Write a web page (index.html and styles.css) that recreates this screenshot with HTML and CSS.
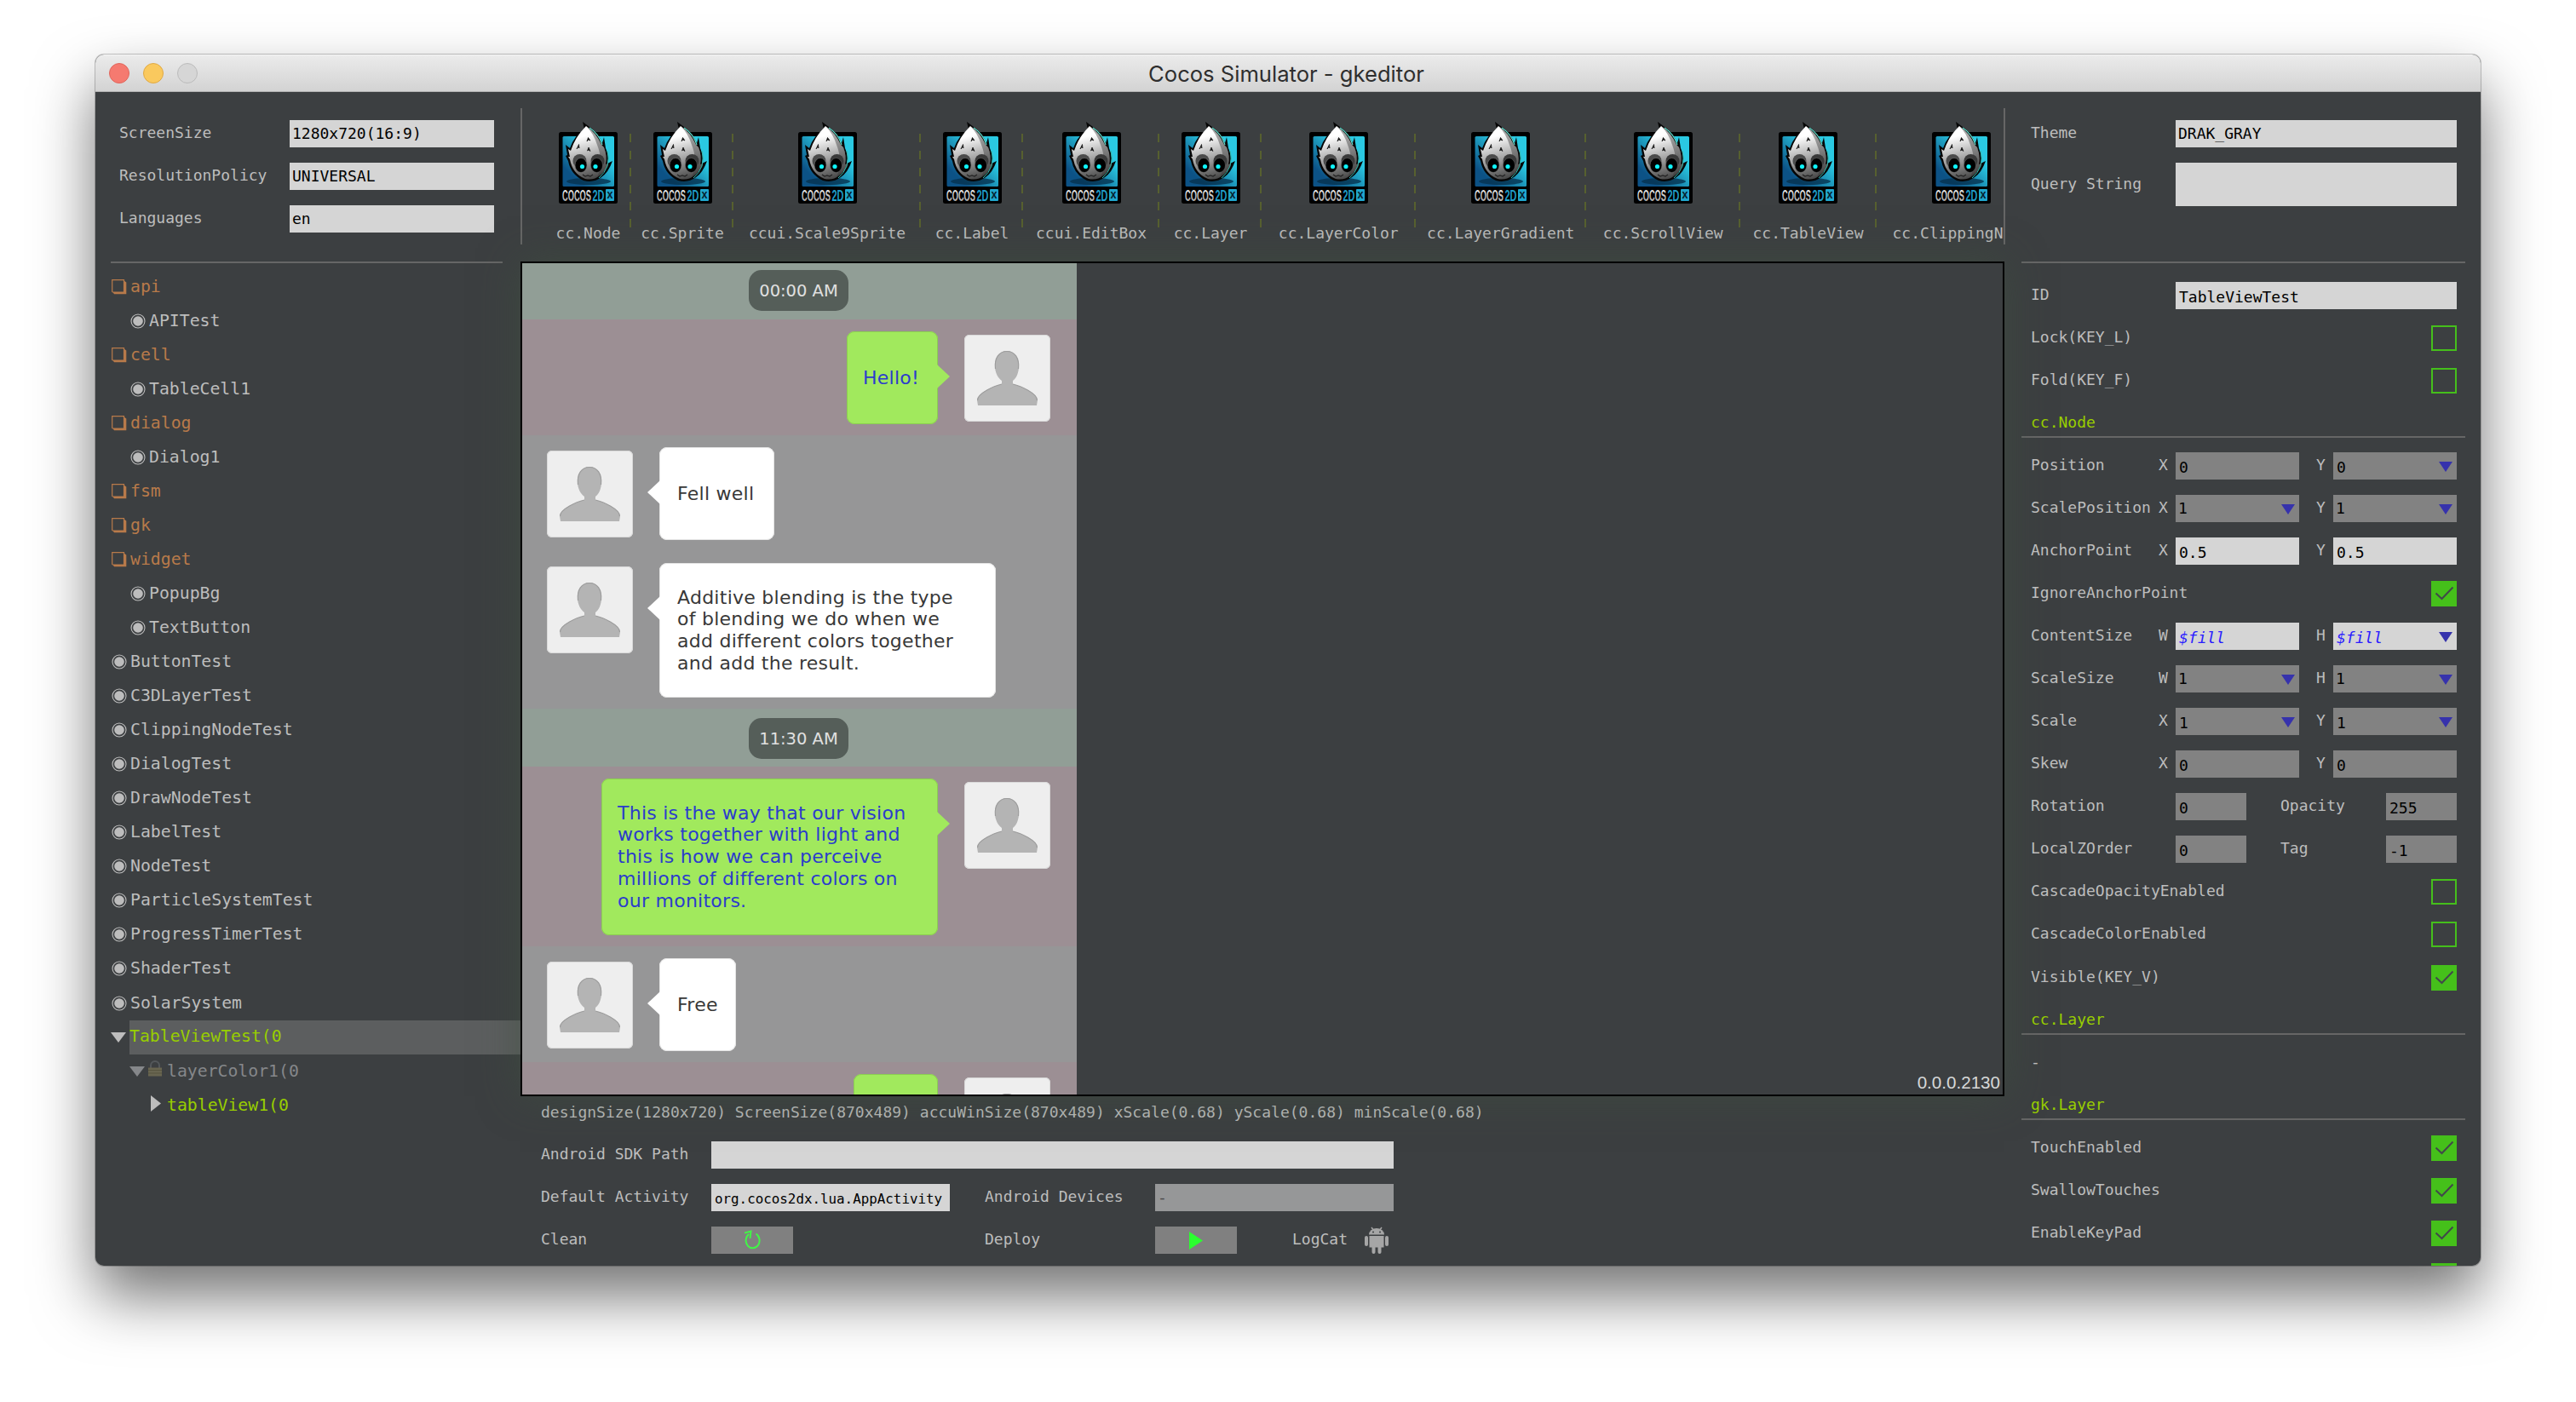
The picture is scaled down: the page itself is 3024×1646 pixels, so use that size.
FILE: index.html
```html
<!DOCTYPE html>
<html lang="en">
<head>
<meta charset="utf-8">
<title>Cocos Simulator - gkeditor</title>
<link rel="stylesheet" href="styles.css">
</head>
<body>
<svg class="defs" width="0" height="0">
  <defs>
    <linearGradient id="sky" x1="1" y1="0" x2="0" y2="1"><stop offset="0.3" stop-color="#2ac9e2"/><stop offset="0.8" stop-color="#0c5286"/></linearGradient>
    <linearGradient id="face" x1="0.3" y1="0" x2="0.5" y2="1"><stop offset="0.2" stop-color="#fff"/><stop offset="0.6" stop-color="#a9a9a9"/><stop offset="1" stop-color="#4a4a4a"/></linearGradient>
    <linearGradient id="silver" x1="0" y1="0" x2="0" y2="1"><stop offset="0" stop-color="#fff"/><stop offset="1" stop-color="#999"/></linearGradient>
    <symbol id="cocos" viewBox="0 0 69 97">
      <rect x="0" y="12" width="69" height="84" rx="2.5" fill="#000"/>
      <rect x="4.5" y="17" width="60.5" height="59" rx="1.5" fill="url(#sky)"/>
      <ellipse cx="35" cy="70" rx="26" ry="4" fill="#06324f" opacity=".8"/>
      <path d="M28 0 L40 9 Q47 15 51 25 L53 18 L55 31 Q59 39 57 49 L63 46 Q58 60 50 65 Q41 72 29 69 Q14 62 11 46 L8 40 L10 39 L8 27 L13 31 Q18 16 30 9 Z" fill="#060606"/>
      <path d="M32 5 Q44 13 50 27 L53 30 Q57 40 55 50 L58 49 Q55 58 48 63 Q41 69 31 67 Q16 61 13 44 L11 41 L13 41 L11 32 L14 34 Q19 18 32 5 Z" fill="url(#face)"/>
      <path d="M32 5 Q44 13 50 27 L53 30 Q57 40 55 50 L58 49 Q54 60 45 65 Q53 47 45 27 Q41 14 32 5 Z" fill="#333" opacity=".42"/>
      <path d="M36 7 Q47 14 51 27" fill="none" stroke="#5fdccb" stroke-width="1.2"/>
      <path d="M57 34 Q60 43 57 52 Q54 60 47 66" fill="none" stroke="#35b9ad" stroke-width="1"/>
      <ellipse cx="24.500" cy="46" rx="8" ry="8" fill="#4b4b4b"/><ellipse cx="45.500" cy="46" rx="8" ry="8" fill="#3a3a3a"/>
      <ellipse cx="26" cy="51" rx="7" ry="8.500" fill="#000" stroke="#777" stroke-width=".6"/>
      <ellipse cx="44.500" cy="51" rx="7" ry="8.500" fill="#000" stroke="#666" stroke-width=".6"/>
      <circle cx="27.500" cy="52.500" r="2.600" fill="#0ef4fb"/><circle cx="43" cy="52.500" r="2.600" fill="#0ef4fb"/>
      <path d="M33 23 L34.500 18.500 L37 22 L34.500 21 Z M21 32 L23.500 26.500 L24 31 L23 29.500 Z M33.500 34 L35 30 L37 34.500 L35 33 Z" fill="#111" stroke="#111" stroke-width=".7"/>
      <path d="M28 62 l3 2 3-1 3 1 3-2" fill="none" stroke="#222" stroke-width="1.200"/>
      <rect x="55" y="79" width="10" height="14" rx="1" fill="#1fa6cc"/>
      <text x="4" y="92.500" class="logo-text" textLength="34" lengthAdjust="spacingAndGlyphs" fill="url(#silver)">COCOS</text>
      <text x="39.500" y="92.500" class="logo-text" textLength="14" lengthAdjust="spacingAndGlyphs" fill="#1f9cc6">2D</text>
      <text x="56.500" y="89.500" class="logo-x" textLength="7" lengthAdjust="spacingAndGlyphs">x</text>
    </symbol>
    <symbol id="person" viewBox="0 0 101 102">
      <path d="M50 19 C59 19 64 27 64 37 C64 45 61 51 57 54 L57 58 C66 60 86 69 86 77 L85 83 L16 83 L15 77 C15 69 35 60 44 58 L44 54 C40 51 36 45 36 37 C36 27 41 19 50 19 Z" fill="#b4b4b4"/>
      <path d="M36.500 40 C35 27 41 19.500 50 19.500 C59 19.500 65 27 63.500 40 M15.500 77 C15 69 35 60 44 58 M57 58 C66 60 86 69 85.500 77" fill="none" stroke="#9c9c9c" stroke-width="1.200"/>
    </symbol>
    <symbol id="folder" viewBox="0 0 18 18"><path d="M.7 .7 H14.500 V15 H1.500 Q.7 15 .7 14 Z" fill="none" stroke="#b87a4a" stroke-width="1.200"/><path d="M14.500 1.500 L17.300 3.500 V17.300 H3 L1.500 15 H14.500 Z" fill="#b87a4a"/></symbol>
    <symbol id="radio" viewBox="0 0 18 18"><circle cx="9" cy="9" r="8" fill="none" stroke="#bdbdbd" stroke-width="1.100"/><circle cx="9" cy="9" r="5.800" fill="#bdbdbd"/></symbol>
    <symbol id="down" viewBox="0 0 18 12" preserveAspectRatio="none"><path d="M0 0H18L9 12Z" fill="currentColor"/></symbol>
    <symbol id="tick" viewBox="0 0 30 30"><path d="M5.500 14.500 L12.500 21 L25.500 7.500" fill="none" stroke="#41484a" stroke-width="2"/></symbol>
  </defs>
</svg>

<main class="window">
  <header class="titlebar">
    <div class="lights"><i class="light red"></i><i class="light amber"></i><i class="light off"></i></div>
    <h1 class="title">Cocos Simulator - gkeditor</h1>
  </header>
  <div class="body">
    <aside class="left">
      <section class="settings">
        <div class="row"><label>ScreenSize</label><div class="field">1280x720(16:9)</div></div>
        <div class="row"><label>ResolutionPolicy</label><div class="field">UNIVERSAL</div></div>
        <div class="row"><label>Languages</label><div class="field">en</div></div>
      </section>
      <ul class="tree">
        <li class="dir"><svg><use href="#folder"/></svg>api</li>
        <li class="sub"><svg><use href="#radio"/></svg>APITest</li>
        <li class="dir"><svg><use href="#folder"/></svg>cell</li>
        <li class="sub"><svg><use href="#radio"/></svg>TableCell1</li>
        <li class="dir"><svg><use href="#folder"/></svg>dialog</li>
        <li class="sub"><svg><use href="#radio"/></svg>Dialog1</li>
        <li class="dir"><svg><use href="#folder"/></svg>fsm</li>
        <li class="dir"><svg><use href="#folder"/></svg>gk</li>
        <li class="dir"><svg><use href="#folder"/></svg>widget</li>
        <li class="sub"><svg><use href="#radio"/></svg>PopupBg</li>
        <li class="sub"><svg><use href="#radio"/></svg>TextButton</li>
        <li><svg><use href="#radio"/></svg>ButtonTest</li>
        <li><svg><use href="#radio"/></svg>C3DLayerTest</li>
        <li><svg><use href="#radio"/></svg>ClippingNodeTest</li>
        <li><svg><use href="#radio"/></svg>DialogTest</li>
        <li><svg><use href="#radio"/></svg>DrawNodeTest</li>
        <li><svg><use href="#radio"/></svg>LabelTest</li>
        <li><svg><use href="#radio"/></svg>NodeTest</li>
        <li><svg><use href="#radio"/></svg>ParticleSystemTest</li>
        <li><svg><use href="#radio"/></svg>ProgressTimerTest</li>
        <li><svg><use href="#radio"/></svg>ShaderTest</li>
        <li><svg><use href="#radio"/></svg>SolarSystem</li>
        <li class="open"><svg class="caret"><use href="#down"/></svg><span class="selected">TableViewTest(0</span></li>
        <li class="locked"><svg class="caret"><use href="#down"/></svg><svg class="lock" viewBox="0 0 16 20"><path d="M3 11V7a5 5 0 0 1 10 0v4" fill="none" stroke="#54585b" stroke-width="2"/><rect y="9.500" width="16" height="10" fill="#686550"/><path d="M0 12.500h16M0 16h16" stroke="#57553f" stroke-width="1"/></svg>layerColor1(0</li>
        <li class="leaf"><svg viewBox="0 0 12 19"><path d="M0 0L12 9.500L0 19Z" fill="#bdbdbd"/></svg>tableView1(0</li>
      </ul>
    </aside>

    <section class="center">
      <nav class="toolbar">
        <div class="tool w100"><svg><use href="#cocos"/></svg><span>cc.Node</span></div>
        <div class="tool w120"><svg><use href="#cocos"/></svg><span>cc.Sprite</span></div>
        <div class="tool w220"><svg><use href="#cocos"/></svg><span>ccui.Scale9Sprite</span></div>
        <div class="tool w120"><svg><use href="#cocos"/></svg><span>cc.Label</span></div>
        <div class="tool w160"><svg><use href="#cocos"/></svg><span>ccui.EditBox</span></div>
        <div class="tool w120"><svg><use href="#cocos"/></svg><span>cc.Layer</span></div>
        <div class="tool w180"><svg><use href="#cocos"/></svg><span>cc.LayerColor</span></div>
        <div class="tool w200"><svg><use href="#cocos"/></svg><span>cc.LayerGradient</span></div>
        <div class="tool w180"><svg><use href="#cocos"/></svg><span>cc.ScrollView</span></div>
        <div class="tool w160"><svg><use href="#cocos"/></svg><span>cc.TableView</span></div>
        <div class="tool w200"><svg><use href="#cocos"/></svg><span>cc.ClippingNode</span></div>
      </nav>

      <div class="stage">
        <div class="chat">
          <div class="time first"><span>00:00 AM</span></div>
          <div class="msg mine short"><div class="bubble b-hello">Hello!</div><svg class="avatar"><use href="#person"/></svg></div>
          <div class="msg short"><svg class="avatar"><use href="#person"/></svg><div class="bubble b-well">Fell well</div></div>
          <div class="msg mid"><svg class="avatar"><use href="#person"/></svg><div class="bubble long">Additive blending is the type<br>of blending we do when we<br>add different colors together<br>and add the result.</div></div>
          <div class="time"><span>11:30 AM</span></div>
          <div class="msg mine tall"><div class="bubble long">This is the way that our vision<br>works together with light and<br>this is how we can perceive<br>millions of different colors on<br>our monitors.</div><svg class="avatar"><use href="#person"/></svg></div>
          <div class="msg short"><svg class="avatar"><use href="#person"/></svg><div class="bubble b-free">Free</div></div>
          <div class="msg mine short"><div class="bubble b-last"></div><svg class="avatar"><use href="#person"/></svg></div>
        </div>
        <div class="version">0.0.0.2130</div>
      </div>

      <footer class="console">
        <div class="line">designSize(1280x720) ScreenSize(870x489) accuWinSize(870x489) xScale(0.68) yScale(0.68) minScale(0.68)</div>
        <div class="line"><label>Android SDK Path</label><div class="field path"></div></div>
        <div class="line"><label>Default Activity</label><div class="field activity">org.cocos2dx.lua.AppActivity</div><label class="second">Android Devices</label><div class="field devices">-</div></div>
        <div class="line"><label>Clean</label>
          <div class="button clean"><svg width="19" height="24" viewBox="0 0 19 24"><path d="M13.500 4.500A8 9 0 1 1 5 5" fill="none" stroke="#41f546" stroke-width="2"/><path d="M0 3.500L7.500 1.500L6.500 10" fill="none" stroke="#41f546" stroke-width="2"/></svg></div>
          <label class="second">Deploy</label>
          <div class="button"><svg width="16" height="21" viewBox="0 0 16 21"><path d="M0 0L16 10.500L0 21Z" fill="#2bff2f"/></svg></div>
          <label class="log">LogCat</label>
          <svg class="robot" viewBox="0 0 28 32" fill="#a6a6a6"><path d="M5 9.500A9 7.500 0 0 1 23 9.500Z"/><path d="M8 1L10.500 4.500M20 1L17.500 4.500" stroke="#a6a6a6" stroke-width="1.400"/><circle cx="10" cy="6.500" r="1" fill="#3c3f41"/><circle cx="18" cy="6.500" r="1" fill="#3c3f41"/><path d="M5.500 11H22.500V24.500H5.500Z"/><rect y="11" width="4" height="12" rx="2"/><rect x="24" y="11" width="4" height="12" rx="2"/><rect x="8.500" y="22" width="4" height="10" rx="2"/><rect x="15.500" y="22" width="4" height="10" rx="2"/></svg>
        </div>
      </footer>
    </section>

    <aside class="right">
      <section class="options">
        <div class="prop"><label>Theme</label><div class="field full">DRAK_GRAY</div></div>
        <div class="prop query"><label>Query String</label><div class="field full"></div></div>
      </section>
      <section class="inspector">
        <div class="prop"><label>ID</label><div class="field full low">TableViewTest</div></div>
        <div class="prop"><label>Lock(KEY_L)</label><div class="check"></div></div>
        <div class="prop"><label>Fold(KEY_F)</label><div class="check"></div></div>
        <h2>cc.Node</h2>
        <div class="prop"><label>Position</label><b>X</b><div class="field dim low">0</div><b>Y</b><div class="field dim low">0<svg><use href="#down"/></svg></div></div>
        <div class="prop"><label>ScalePosition</label><b>X</b><div class="field dim">1<svg><use href="#down"/></svg></div><b>Y</b><div class="field dim">1<svg><use href="#down"/></svg></div></div>
        <div class="prop"><label>AnchorPoint</label><b>X</b><div class="field low">0.5</div><b>Y</b><div class="field low">0.5</div></div>
        <div class="prop"><label>IgnoreAnchorPoint</label><div class="check on"><svg><use href="#tick"/></svg></div></div>
        <div class="prop"><label>ContentSize</label><b>W</b><div class="field low macro">$fill</div><b>H</b><div class="field low macro">$fill<svg><use href="#down"/></svg></div></div>
        <div class="prop"><label>ScaleSize</label><b>W</b><div class="field dim">1<svg><use href="#down"/></svg></div><b>H</b><div class="field dim">1<svg><use href="#down"/></svg></div></div>
        <div class="prop"><label>Scale</label><b>X</b><div class="field dim low">1<svg><use href="#down"/></svg></div><b>Y</b><div class="field dim low">1<svg><use href="#down"/></svg></div></div>
        <div class="prop"><label>Skew</label><b>X</b><div class="field dim low">0</div><b>Y</b><div class="field dim low">0</div></div>
        <div class="prop pair"><label>Rotation</label><div class="field dim low">0</div><label>Opacity</label><div class="field dim low">255</div></div>
        <div class="prop pair"><label>LocalZOrder</label><div class="field dim low">0</div><label>Tag</label><div class="field dim low">-1</div></div>
        <div class="prop"><label>CascadeOpacityEnabled</label><div class="check"></div></div>
        <div class="prop"><label>CascadeColorEnabled</label><div class="check"></div></div>
        <div class="prop"><label>Visible(KEY_V)</label><div class="check on"><svg><use href="#tick"/></svg></div></div>
        <h2>cc.Layer</h2>
        <div class="prop"><label>-</label></div>
        <h2>gk.Layer</h2>
        <div class="prop"><label>TouchEnabled</label><div class="check on"><svg><use href="#tick"/></svg></div></div>
        <div class="prop"><label>SwallowTouches</label><div class="check on"><svg><use href="#tick"/></svg></div></div>
        <div class="prop"><label>EnableKeyPad</label><div class="check on"><svg><use href="#tick"/></svg></div></div>
        <div class="prop"><label></label><div class="check on"></div></div>
      </section>
    </aside>
  </div>
</main>
</body>
</html>
```
FILE: styles.css
```css
* { box-sizing: border-box; }
html, body { margin: 0; height: 1646px; overflow: hidden; background: #fff; }
body {
  padding: 64px 0 0 112px;
  font: 18px/24px "DejaVu Sans Mono", monospace;
  color: #bdbdbd;
}
.defs { position: absolute; }
.window {
  width: 2800px;
  height: 1422px;
  display: flex;
  flex-direction: column;
  border-radius: 10px;
  overflow: hidden;
  background: #3c3f41;
  box-shadow: 0 0 0 1px rgba(0,0,0,.22), 0 36px 70px rgba(0,0,0,.55);
}
.titlebar {
  height: 44px;
  flex: none;
  display: grid;
  grid-template-columns: 300px 1fr 300px;
  align-items: center;
  background: linear-gradient(#ebebeb, #d3d3d3);
  border-top: 1px solid #f5f5f5;
  border-bottom: 1px solid #b4b4b4;
}
.lights { display: flex; gap: 16px; padding-left: 16px; }
.light { width: 24px; height: 24px; border-radius: 50%; border: 1px solid #bbb; }
.red { background: #f57a70; border-color: #e0665c; }
.amber { background: #fac95e; border-color: #dfa945; }
.off { background: #d6d6d6; }
.title {
  margin: 0;
  text-align: center;
  position: relative;
  left: -2px;
  top: 1px;
  font: 400 25.600px/40px Inter, sans-serif;
  color: #2e2e2e;
}
.body { flex: 1; min-height: 0; display: flex; }

.left { width: 499px; flex: none; }
.settings { height: 201px; margin: 0 21px 0 18px; padding: 33px 0 0 10px; border-bottom: 2px solid #666; display: flex; flex-direction: column; gap: 18px; }
.row { display: flex; align-items: center; height: 32px; }
.row label { width: 200px; }
.field {
  height: 32px;
  padding-left: 3px;
  line-height: 31px;
  background: #d5d5d5;
  color: #000;
  white-space: pre;
}
.row .field { width: 240px; }
.low { padding-left: 4px; line-height: 35px; }
label, b, .tool span { position: relative; top: -1px; font-weight: 400; white-space: pre; }

.tree { list-style: none; margin: 7.500px 0 0; padding: 0; font-size: 19.800px; }
.tree li { height: 40.050px; display: flex; align-items: center; padding-left: 19px; line-height: 38px; }
.tree svg { width: 18px; height: 18px; margin-right: 4px; flex: none; }
.tree .sub { padding-left: 41px; }
.dir { color: #b87a4a; }
.tree .open { padding-left: 18px; }
.tree .caret { height: 12px; margin-right: 4px; color: #bdbdbd; }
.selected { flex: 1; height: 100%; background: #5c5e5f; color: #98ce00; }
.tree .locked { padding-left: 40px; color: #85878a; }
.tree .locked .caret { color: #85878a; }
.tree .lock { width: 16px; height: 20px; margin: -7px 6px 0 0; }
.tree .leaf { padding-left: 65px; color: #98ce00; }
.tree .leaf svg { width: 12px; height: 19px; margin: -4px 7px 0 0; }

.center { width: 1743px; flex: none; display: flex; flex-direction: column; }
.toolbar {
  height: 160px;
  flex: none;
  margin-top: 19px;
  padding-left: 27px;
  display: flex;
  overflow: hidden;
  border-left: 2px solid #666;
  border-right: 2px solid #666;
}
.tool {
  flex: none;
  padding-top: 16px;
  display: flex;
  flex-direction: column;
  align-items: center;
  background: repeating-linear-gradient(#57602f 0 10px, transparent 10px 20px) right 30px / 2px 110px no-repeat;
}
.tool svg { width: 69px; height: 97px; flex: none; }
.tool span { margin-top: 23px; line-height: 24px; flex: none; }
.w100 { width: 101px; }
.w120 { width: 120px; }
.w160 { width: 160px; }
.w180 { width: 180.500px; }
.w200 { width: 200.500px; }
.w220 { width: 220px; }
.logo-text { font: bold 18.500px "Liberation Sans", sans-serif; }
.logo-x { font: bold 14px "Liberation Sans", sans-serif; fill: #06202c; }

.stage {
  position: relative;
  height: 980px;
  margin-top: 20px;
  flex: none;
  overflow: hidden;
  border: 2px solid #000;
  background: #3c3f41;
  display: flex;
  justify-content: space-between;
  align-items: flex-end;
  box-shadow: 0 0 44px rgba(62,80,62,.6);
  width: 1742px;
}
.chat { width: 651px; height: 976px; overflow: hidden; font: 22px/25.700px "DejaVu Sans", sans-serif; letter-spacing: .26px; color: #383838; }
.time { height: 68px; display: flex; justify-content: center; align-items: flex-start; padding: 11px 2px 0 0; background: #919e96; font-size: 19.500px; letter-spacing: 0; color: #e0e0e0; }
.time.first { height: 66px; padding-top: 8px; }
.time span { width: 117px; height: 48px; line-height: 49px; text-align: center; border-radius: 15px; background: #555e59; }
.msg { display: flex; align-items: flex-start; gap: 31px; padding: 14px 31px 0 29px; background: #969697; }
.mine { justify-content: flex-end; background: #9c8f94; color: #2b3ccc; }
.short { height: 136px; }
.mid { height: 185px; }
.tall { height: 211px; }
.avatar { width: 101px; height: 102px; margin-top: 4px; flex: none; border-radius: 6px; background: #eee; box-shadow: inset 0 0 0 1px #d9d9d9; }
.bubble {
  position: relative;
  min-height: 109px;
  padding: 0 0 0 21px;
  display: flex;
  align-items: center;
  border-radius: 9px;
  background: #fff;
  white-space: pre;
  box-shadow: inset 0 0 0 1px #e4e4e4;
}
.bubble::after {
  content: "";
  position: absolute;
  top: 39px;
  left: -14px;
  border: solid transparent;
  border-width: 14px 15px 14px 0;
  border-right-color: #fff;
}
.mine .bubble { padding-left: 19px; background: #a1e95d; box-shadow: inset 0 0 0 1px #8bd04f; }
.mine .bubble::after { left: auto; right: -14px; border-width: 14px 0 14px 15px; border-left-color: #a1e95d; }
.b-hello { width: 107px; }
.b-well { width: 135px; }
.b-free { width: 90px; }
.b-last { width: 99px; }
.long { width: 395px; }
.mid .long { height: 158px; }
.tall .long { height: 184px; }
.version { padding: 0 3px 2px 0; font: 20.600px/24px "Liberation Sans", sans-serif; color: #d6d8d8; }

.console { flex: 1; padding: 3px 0 0 24px; }
.line { height: 32px; margin-bottom: 18px; display: flex; align-items: center; white-space: pre; }
.line:first-child { letter-spacing: .012px; }
.line label { width: 200px; }
.line .second { width: 200px; margin-left: 41px; }
.path { width: 801px; }
.activity { width: 280px; font-size: 15.850px; line-height: 35px; padding-left: 4px; }
.devices { width: 280px; background: #969798; color: #4a4a4a; }
.button { width: 96px; height: 32px; display: flex; align-items: center; justify-content: center; background: #808080; }
.clean { margin-right: 184px; }
.line .log { width: 85px; margin-left: 65px; }
.robot { width: 28px; height: 32px; }

.right { flex: 1; min-width: 0; padding-left: 19px; }
.options { width: 521px; height: 201px; padding: 24px 10px 0 11px; border-bottom: 2px solid #666; }
.prop { height: 50.040px; display: flex; align-items: center; }
.inspector { width: 521px; padding-top: 13px; }
.inspector .prop { padding: 0 10px 0 11px; }
.prop label { width: 150px; }
.prop b { width: 20px; }
.prop .field { position: relative; width: 145px; }
.prop .field + b { margin-left: 20px; }
.prop .full { width: 330px; margin-left: 20px; }
.options .prop { height: 50px; }
.options .query { height: 70px; }
.options .query .field { height: 51px; margin-top: -1px; }
.field svg { position: absolute; right: 5px; top: 11px; width: 16px; height: 12px; color: #3632ac; }
.dim { background: #828282; }
.macro { color: #2a1cff; font-style: italic; }
.pair .field { width: 83px; margin-left: 20px; }
.pair .field + label { width: 104px; margin-left: 40px; }
.check { width: 30px; height: 30px; margin: 0 0 0 auto; border: 2px solid #45bf1b; }
.prop label + .check { flex: none; }
.on { background: #45c01a; }
.on svg { display: block; width: 30px; height: 30px; margin: -2px; }
h2 { height: 50.040px; margin: 0; padding: 12px 0 0 11px; font: 18px/24px "DejaVu Sans Mono", monospace; color: #98ce00; background: linear-gradient(#666, #666) 0 40px / 100% 2px no-repeat; }
```
